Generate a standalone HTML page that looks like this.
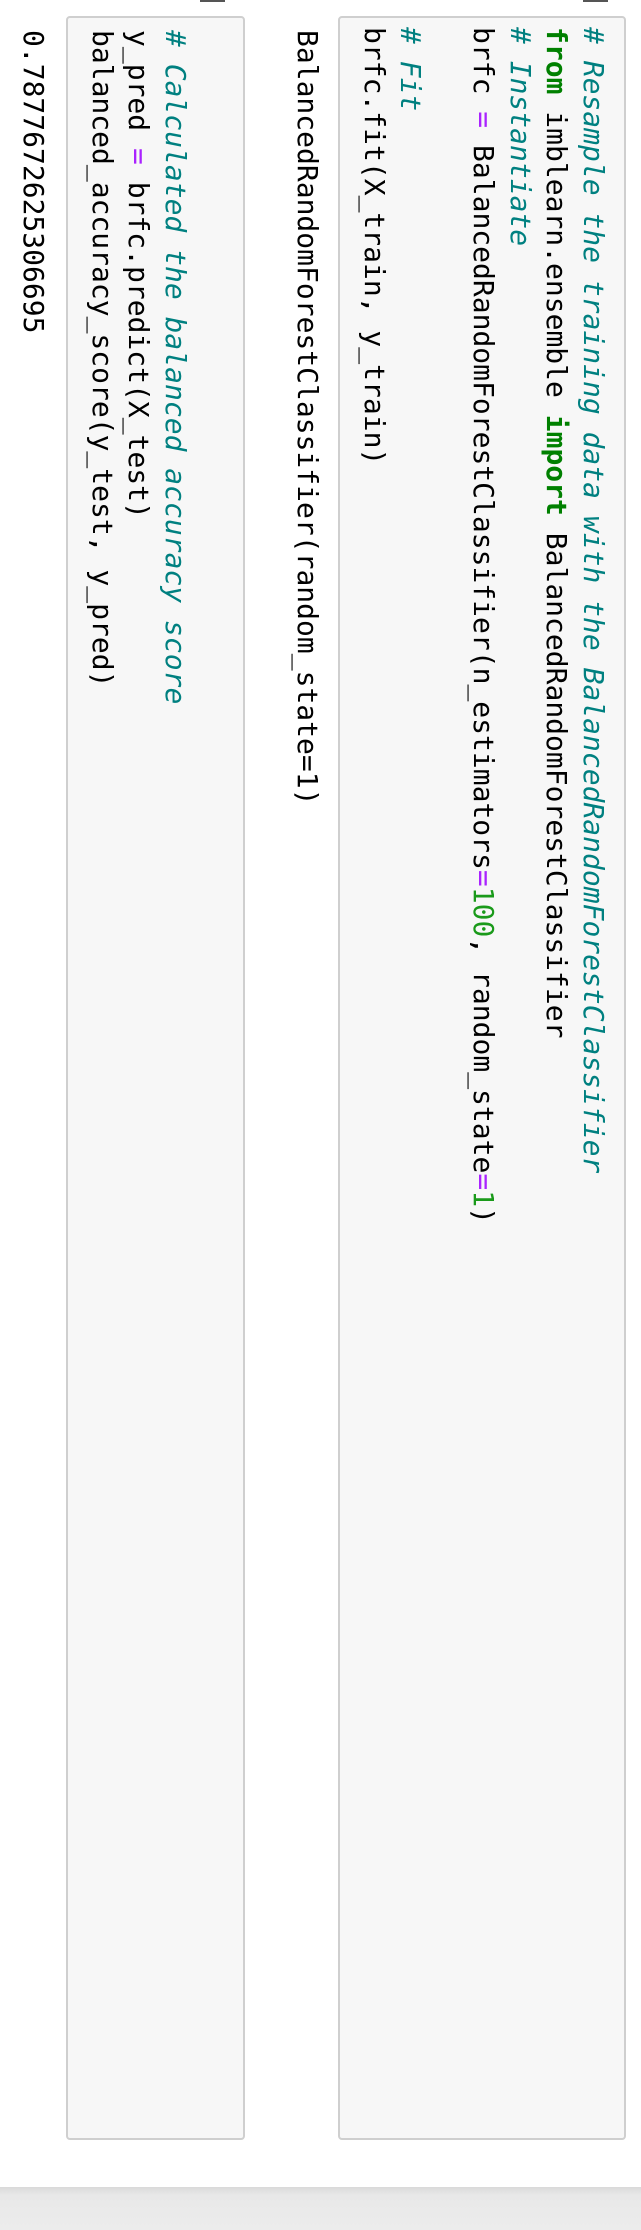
<!DOCTYPE html>
<html><head><meta charset="utf-8"><style>
html,body{margin:0;padding:0;background:#fff;}
body{width:641px;height:2230px;overflow:hidden;position:relative;}
#r{position:absolute;left:0;top:0;width:2230px;height:641px;transform-origin:0 0;transform:translateX(641px) rotate(90deg);background:#fff;}
.box{position:absolute;background:#f7f7f7;border:2px solid #cfcfcf;border-radius:4px;box-sizing:border-box;}
pre{position:absolute;margin:0;font-family:"DejaVu Sans Mono","Liberation Mono",monospace;font-size:28px;line-height:36.5px;color:#000;white-space:pre;}
.c{color:#008080;font-style:italic;}
.k{color:#008000;font-weight:bold;}
.o{color:#aa22ff;}
.n{color:#1a9a1a;}
.mark{position:absolute;left:0;width:2px;height:25px;background:#555;}
#strip{position:absolute;left:2187px;top:0;width:43px;height:641px;background:linear-gradient(to right,#d9d9d9,#e8e8e8 8px,#ececec);}
</style></head><body>
<div id="r">
<div class="mark" style="top:33px"></div>
<div class="mark" style="top:416px"></div>
<div class="box" style="left:16px;top:15px;width:2124px;height:288px"></div>
<pre style="left:27px;top:30px"><span class="c"># Resample the training data with the BalancedRandomForestClassifier</span>
<span class="k">from</span> imblearn.ensemble <span class="k">import</span> BalancedRandomForestClassifier
<span class="c"># Instantiate</span>
brfc <span class="o">=</span> BalancedRandomForestClassifier(n_estimators<span class="o">=</span><span class="n">100</span>, random_state<span class="o">=</span><span class="n">1</span>)

<span class="c"># Fit</span>
brfc.fit(X_train, y_train)</pre>
<pre style="left:30px;top:316px">BalancedRandomForestClassifier(random_state=1)</pre>
<div class="box" style="left:16px;top:396px;width:2124px;height:179px"></div>
<pre style="left:30px;top:448px"><span class="c"># Calculated the balanced accuracy score</span>
y_pred <span class="o">=</span> brfc.predict(X_test)
balanced_accuracy_score(y_test, y_pred)</pre>
<pre style="left:30px;top:590px">0.7877672625306695</pre>
<div id="strip"></div>
</div>
</body></html>
